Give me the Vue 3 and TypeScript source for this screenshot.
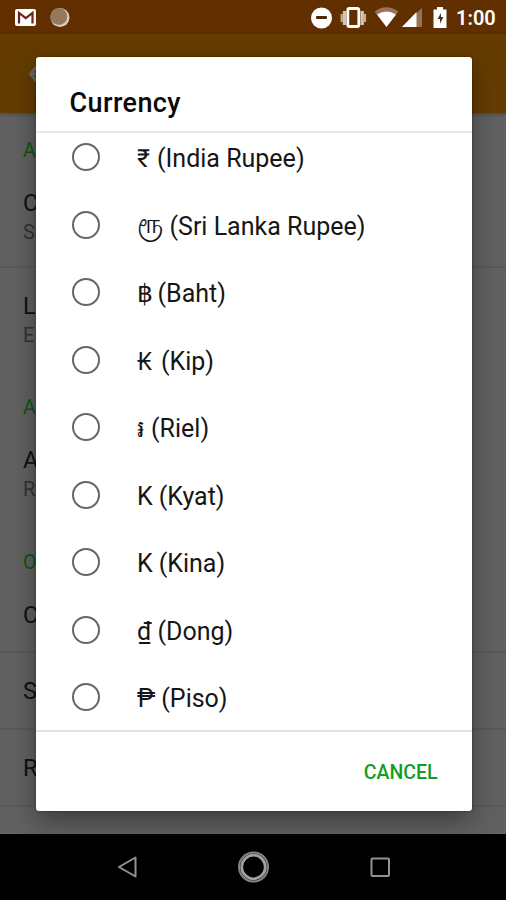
<script setup lang="ts">
import { ref } from 'vue'

interface Currency {
  symbol: string
  name: string
  kind: string
}

interface SettingRow {
  kind: 'section' | 'double' | 'single'
  title: string
  summary?: string
  divider?: boolean
}

const currencies: Currency[] = [
  { symbol: '₹', name: 'India Rupee', kind: 'inr' },
  { symbol: 'ரூ', name: 'Sri Lanka Rupee', kind: 'lkr' },
  { symbol: '฿', name: 'Baht', kind: 'thb' },
  { symbol: '₭', name: 'Kip', kind: 'lak' },
  { symbol: '៛', name: 'Riel', kind: 'khr' },
  { symbol: 'K', name: 'Kyat', kind: 'mmk' },
  { symbol: 'K', name: 'Kina', kind: 'pgk' },
  { symbol: '₫', name: 'Dong', kind: 'vnd' },
  { symbol: '₱', name: 'Piso', kind: 'php' },
]

const settings: SettingRow[] = [
  { kind: 'section', title: 'A' },
  { kind: 'double', title: 'C', summary: 'S', divider: true },
  { kind: 'double', title: 'L', summary: 'E' },
  { kind: 'section', title: 'A' },
  { kind: 'double', title: 'A', summary: 'R' },
  { kind: 'section', title: 'O' },
  { kind: 'single', title: 'C', divider: true },
  { kind: 'single', title: 'S', divider: true },
  { kind: 'single', title: 'R', divider: true },
]

const selected = ref<string | null>(null)
</script>

<template>
  <div class="screen">
    <header class="status">
      <svg class="status-left" width="80" height="34" viewBox="0 0 80 34">
        <rect x="15" y="9" width="21" height="17" rx="2" fill="#fff" />
        <path d="M19 23.500V13l6.800 5.200L32.500 13v10.500" fill="none" stroke="#702018" stroke-width="2.200" />
        <circle cx="60" cy="17.500" r="9.500" fill="#d9cdbf" />
        <circle cx="58.800" cy="16.500" r="8.500" fill="#96795a" />
      </svg>
      <svg class="status-right" width="146" height="34" viewBox="308 0 146 34">
        <circle cx="321.500" cy="18" r="10.500" fill="#fff" />
        <rect x="316" y="16" width="11" height="3" rx="1" fill="#542300" />
        <rect x="347.800" y="8.500" width="11" height="18" rx="1.500" fill="none" stroke="#fff" stroke-width="2.800" />
        <path d="M344.500 11v14M362.200 11v14" stroke="#d4c4b7" stroke-width="3.400" />
        <path d="M341.700 14v8M365 14v8" stroke="#c3ad9d" stroke-width="2.200" />
        <path d="M374.500 11.500Q386.500 3 398.500 11.500L386.500 27Z" fill="#987355" />
        <path d="M377 14.500Q386.500 8.500 396 14.500L386.500 27Z" fill="#fff" />
        <path d="M402 27L422 8v19Z" fill="#987355" />
        <path d="M402 27L416.500 12v15Z" fill="#fff" />
        <path d="M437 7h6v2.500h3.500V28h-13V9.500h3.500Z" fill="#fff" />
        <path d="M441 13l-3.500 6h2.500v4.500l3.500-6.500h-2.500Z" fill="#4c3020" />
      </svg>
      <span class="clock">1:00</span>
    </header>
    <div class="appbar">
      <svg width="24" height="24" viewBox="0 0 24 24">
        <path d="M11 3L3.500 12l7.500 9M5 12h18" fill="none" stroke="#666" stroke-width="3" />
      </svg>
    </div>

    <main class="settings">
      <div
        v-for="(row, i) in settings"
        :key="i"
        class="setting"
        :class="[row.kind, { divider: row.divider }]"
      >
        <span class="setting-title">{{ row.title }}</span>
        <span v-if="row.summary" class="setting-summary">{{ row.summary }}</span>
      </div>
    </main>

    <nav class="navbar">
      <svg width="506" height="66" viewBox="0 0 506 66">
        <path d="M119 33l16.500-9.500v19Z" fill="none" stroke="#929292" stroke-width="2" stroke-linejoin="round" />
        <circle cx="253.500" cy="33" r="14.500" fill="none" stroke="#858585" stroke-width="2" />
        <circle cx="253.500" cy="33" r="11.800" fill="none" stroke="#a0a0a0" stroke-width="2.800" />
        <rect x="371.500" y="24.500" width="17.500" height="17.500" rx="1" fill="none" stroke="#929292" stroke-width="2" />
      </svg>
    </nav>

    <section class="dialog" role="dialog">
      <h1 class="dialog-title">Currency</h1>
      <div class="options">
        <label v-for="c in currencies" :key="c.name" class="option">
          <input v-model="selected" class="radio" type="radio" name="currency" :value="c.name" />
          <span class="label"><span class="symbol" :class="c.kind">{{ c.symbol }}</span><span>({{ c.name }})</span></span>
        </label>
      </div>
      <footer class="actions">
        <button type="button" class="cancel">CANCEL</button>
      </footer>
    </section>
  </div>
</template>

<style>
body {
  margin: 0;
}
</style>

<style scoped>
.screen {
  position: relative;
  width: 506px;
  height: 900px;
  overflow: hidden;
  display: flex;
  flex-direction: column;
  background: #616161;
  font-family: Roboto, "Noto Sans", sans-serif;
}

.status {
  height: 34px;
  flex: none;
  display: flex;
  background: #612f00;
}

.status-left {
  margin-right: auto;
}

.clock {
  width: 52px;
  line-height: 36px;
  font-size: 20px;
  font-weight: 600;
  box-sizing: border-box;
  padding-left: 2px;
  color: #fff;
}

.appbar {
  height: 79px;
  flex: none;
  display: flex;
  align-items: center;
  box-sizing: border-box;
  padding-left: 27px;
  background: #643c00;
  box-shadow: 0 1px 4px rgba(0, 0, 0, 0.3);
}

.settings {
  flex: 1;
  overflow: hidden;
}

.setting {
  display: flex;
  flex-direction: column;
  box-sizing: border-box;
  padding: 23px 23px 0;
  color: #111;
}

.section {
  height: 52px;
}

.double {
  height: 102.500px;
}

.single {
  height: 76.700px;
}

.divider {
  border-bottom: 2px solid #595959;
}

.setting-title {
  font-size: 23.500px;
  line-height: 31px;
}

.section .setting-title {
  color: #0b5612;
  font-size: 19.500px;
  line-height: 30px;
}

.setting-summary {
  font-size: 20px;
  line-height: 26px;
  color: #333;
}

.navbar {
  height: 66px;
  flex: none;
  background: #000;
}

.dialog {
  position: absolute;
  left: 36px;
  top: 57px;
  width: 436px;
  height: 754px;
  display: flex;
  flex-direction: column;
  background: #fff;
  border-radius: 3px;
  box-shadow: 0 0 2px rgba(0, 0, 0, 0.5), 0 10px 26px rgba(0, 0, 0, 0.38);
}

.dialog-title {
  flex: none;
  box-sizing: border-box;
  height: 75.500px;
  margin: 0;
  padding: 16px 0 0 33.500px;
  border-bottom: 2px solid #e8e8e8;
  font-size: 27px;
  line-height: 60px;
  font-weight: 500;
  letter-spacing: 0.4px;
  color: #0a0a0a;
}

.options {
  flex: none;
  height: 597.500px;
  box-sizing: border-box;
  overflow: hidden;
  display: grid;
  grid-auto-rows: 67.500px;
  align-content: end;
}

.option {
  display: flex;
  align-items: center;
  padding: 2px 0 0 36px;
}

.radio {
  appearance: none;
  flex: none;
  width: 28px;
  height: 28px;
  margin: 0 37px 0 0;
  box-sizing: border-box;
  border: 2.400px solid #666;
  border-radius: 50%;
}

.radio:checked {
  border-color: #159d23;
  background: radial-gradient(circle, #159d23 45%, transparent 48%);
}

.label {
  display: flex;
  gap: 6px;
  height: 34px;
  font-size: 25px;
  line-height: 34px;
  padding-top: 4px;
  white-space: nowrap;
  color: #161616;
}

.symbol {
  flex: none;
}

.inr {
  width: 14px;
}

.lkr {
  width: 26.500px;
  font-size: 28px;
  line-height: 27px;
}

.thb {
  width: 14.500px;
  font-size: 25px;
}

.lak {
  width: 18px;
  font-size: 26px;
  line-height: 33px;
}

.khr {
  font-size: 24px;
}

.actions {
  flex: 1;
  display: flex;
  justify-content: flex-end;
  align-items: center;
  border-top: 2px solid #e3e3e3;
  padding-right: 34.500px;
}

.cancel {
  border: 0;
  padding: 3px 0 0;
  background: none;
  font: 500 19.500px/28px Roboto, sans-serif;
  color: #159d23;
}
</style>
